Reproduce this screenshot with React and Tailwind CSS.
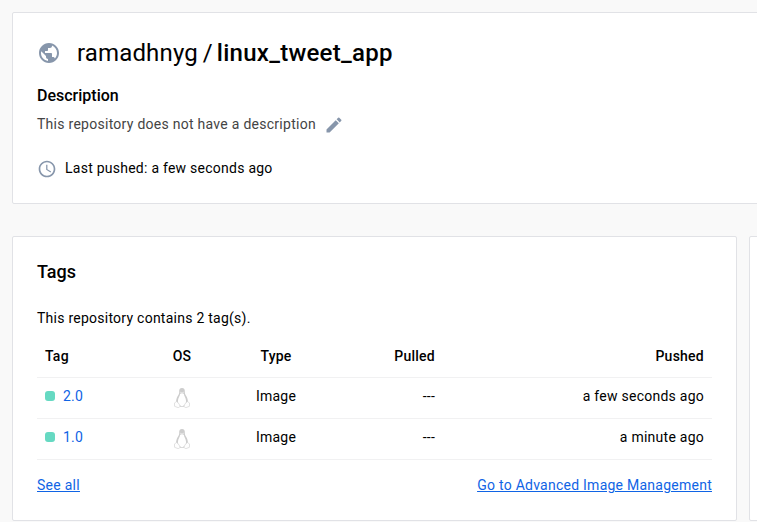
import React from "react";
import { MdPublic, MdEdit, MdAccessTime } from "react-icons/md";

function Tux() {
  return (
    <svg viewBox="0 0 16 20" className="h-5 w-4 shrink-0">
      <path d="M8 0C5.800 0 5 1.600 5.200 3.600c.1 2-.3 2.800-1.300 4.200C2.600 9.800 2 12 2 14.500L5 18h6l3-3.500c0-2.500-.6-4.700-1.900-6.700-1-1.400-1.300-2.200-1.300-4.200C11 1.600 10.200 0 8 0Z" fill="#cdcdcd" />
      <path d="M8 5.300c-.9 0-1.500.3-1.900.8C6 8.200 4.100 10 3.900 13c0 2.500 1.600 5 4.100 5s4.100-2.500 4.100-5c-.2-3-2.100-4.800-2.200-6.900-.4-.5-1-.8-1.900-.8Z" fill="#fff" />
      <path d="M6.300 4.200 8 5.200l1.700-1" stroke="#eee" strokeWidth="1" fill="none" />
      <path d="M2.600 13.500C3.900 14.300 5.200 16 5.800 17.500c.3 1.300-.5 2.200-1.800 2.100L.6 18.300.4 15ZM13.400 13.500c-1.300.8-2.600 2.500-3.200 4-.3 1.300.5 2.200 1.800 2.100l3.400-1.300.2-3.300Z" fill="#fefefe" stroke="#d4d4d4" strokeWidth=".7" />
      <path d="M6 18.500h4" stroke="#d0d0d0" strokeWidth=".8" />
    </svg>
  );
}

const tags = [
  { name: "2.0", pushed: "a few seconds ago" },
  { name: "1.0", pushed: "a minute ago" },
];

const columns = "grid grid-cols-[113px_64px_124px_105px_269px] items-center border-b border-[#f1f1f2]";

export default function App() {
  return (
    <div className="flex h-[522px] w-[757px] flex-col gap-8 overflow-hidden bg-[#f9f9f9] pt-3 pl-3 font-[Roboto,sans-serif] text-sm leading-5 tracking-[0.25px] text-black">
      <section className="h-48 w-[800px] shrink-0 rounded-xs border border-[#e1e2e6] bg-white pl-6">
        <h1 className="mt-6 flex h-8 items-center text-2xl tracking-normal">
          <MdPublic className="mr-4 size-6 text-[#8796ab]" />
          <span className="tracking-[0.15px]">ramadhnyg</span>
          <span className="ml-[5px]">/</span>
          <span className="ml-1 font-medium tracking-[0.27px]">linux_tweet_app</span>
        </h1>
        <h2 className="mt-[17px] h-5 text-base leading-5 font-medium tracking-normal">Description</h2>
        <div className="mt-2 flex h-5 items-center text-[#444]">
          <span className="tracking-[0.27px]">This repository does not have a description</span>
          <MdEdit className="mt-0.5 ml-2 size-5 text-[#8796ab]" />
        </div>
        <div className="mt-6 flex h-5 items-center">
          <MdAccessTime className="mt-0.5 mr-2 size-5 text-[#8796ab]" />
          Last pushed: a few seconds ago
        </div>
      </section>
      <div className="flex gap-3">
        <section className="h-[285px] w-[725px] shrink-0 rounded-xs border border-[#e1e2e6] bg-white px-6">
          <h2 className="mt-[23px] h-6 text-lg leading-6 font-medium tracking-normal">Tags</h2>
          <p className="mt-6 h-5">This repository contains 2 tag(s).</p>
          <div className="mt-[7px] flex flex-col">
            <div className={columns + " h-[43px] font-medium"}>
              <span className="pl-2">Tag</span>
              <span className="text-center">OS</span>
              <span className="text-center">Type</span>
              <span className="pr-2 text-right">Pulled</span>
              <span className="pr-2 text-right">Pushed</span>
            </div>
            {tags.map((t) => (
              <div key={t.name} className={columns + " h-[41px] pb-1"}>
                <span className="flex items-center pl-2 text-[#1064e5]">
                  <span className="mr-2 size-2.5 rounded-[3px] bg-[#66d9c2]" />
                  {t.name}
                </span>
                <span className="flex justify-center pt-1"><Tux /></span>
                <span className="text-center">Image</span>
                <span className="pr-2 text-right">---</span>
                <span className="pr-2 text-right">{t.pushed}</span>
              </div>
            ))}
          </div>
          <div className="mt-[15px] flex justify-between text-[#1064e5] underline">
            <a>See all</a>
            <a>Go to Advanced Image Management</a>
          </div>
        </section>
        <section className="h-[285px] w-10 shrink-0 rounded-xs border border-[#e1e2e6] bg-white" />
      </div>
    </div>
  );
}
